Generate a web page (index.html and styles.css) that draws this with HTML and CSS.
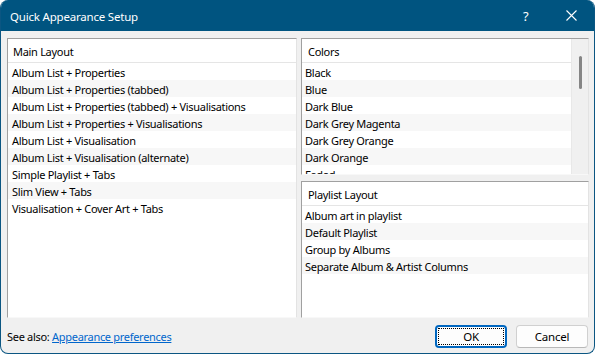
FILE: index.html
```html
<!DOCTYPE html>
<html>
<head>
<meta charset="utf-8">
<link rel="stylesheet" href="styles.css">
</head>
<body>
<div class="window">
  <div class="titlebar">
    <span class="title">Quick Appearance Setup</span>
    <span class="help">?</span>
    <span class="close"><svg width="11" height="11" viewBox="0 0 11 11"><path d="M0.5 0.5 L10.5 10.5 M10.5 0.5 L0.5 10.5" stroke="#fff" stroke-width="1.1" fill="none"/></svg></span>
  </div>
  <div class="content">
    <div class="panel main">
      <div class="list">
        <div class="header">Main Layout</div>
        <div class="row">Album List + Properties</div>
        <div class="row alt">Album List + Properties (tabbed)</div>
        <div class="row">Album List + Properties (tabbed) + Visualisations</div>
        <div class="row alt">Album List + Properties + Visualisations</div>
        <div class="row">Album List + Visualisation</div>
        <div class="row alt">Album List + Visualisation (alternate)</div>
        <div class="row">Simple Playlist + Tabs</div>
        <div class="row alt">Slim View + Tabs</div>
        <div class="row">Visualisation + Cover Art + Tabs</div>
      </div>
    </div>
    <div class="side">
      <div class="panel colors">
        <div class="list">
          <div class="header">Colors</div>
          <div class="row">Black</div>
          <div class="row alt">Blue</div>
          <div class="row">Dark Blue</div>
          <div class="row alt">Dark Grey Magenta</div>
          <div class="row">Dark Grey Orange</div>
          <div class="row alt">Dark Orange</div>
          <div class="row">Faded</div>
        </div>
        <div class="scrollbar"><div class="thumb"></div></div>
      </div>
      <div class="panel playlist">
        <div class="list">
          <div class="header">Playlist Layout</div>
          <div class="row">Album art in playlist</div>
          <div class="row alt">Default Playlist</div>
          <div class="row">Group by Albums</div>
          <div class="row alt">Separate Album &amp; Artist Columns</div>
        </div>
      </div>
    </div>
  </div>
  <div class="footer">
    <div class="seealso">See also: <a class="link" href="#">Appearance preferences</a></div>
    <div class="buttons">
      <button class="btn default"><span class="focus">OK</span></button>
      <button class="btn">Cancel</button>
    </div>
  </div>
</div>
</body>
</html>
```

FILE: styles.css
```css
html, body {
  margin: 0;
  padding: 0;
  background: #ffffff;
}
body {
  font-family: "Noto Sans", "Open Sans", "DejaVu Sans", sans-serif;
  font-size: 11px;
  letter-spacing: -0.3px;
  color: #000;
}
.window {
  width: 595px;
  height: 354px;
  box-sizing: border-box;
  border: 1px solid #0b5682;
  border-top: none;
  border-radius: 8px;
  background: #f0f0f0;
  overflow: hidden;
  display: flex;
  flex-direction: column;
}
.titlebar {
  height: 31px;
  flex: none;
  background: #005480;
  color: #fff;
  display: flex;
  align-items: center;
  padding-left: 9px;
  font-size: 11.5px;
  letter-spacing: -0.2px;
}
.title {
  flex: 1;
  padding-top: 1px;
}
.help {
  width: 12px;
  margin-right: 31px;
  font-size: 13px;
}
.close {
  display: flex;
  width: 11px;
  height: 11px;
  margin-right: 17px;
}
.content {
  flex: none;
  display: grid;
  grid-template-columns: 290px 288px;
  column-gap: 4px;
  padding: 7px 6px 0 6px;
  height: 280px;
}
.panel {
  box-sizing: border-box;
  background: #fff;
  border-top: 1px solid #a0a0a0;
  border-left: 1px solid #a0a0a0;
  border-right: 1px solid #e3e3e3;
  border-bottom: 1px solid #f8f8f8;
  overflow: hidden;
}
.main {
  height: 280px;
}
.side {
  display: flex;
  flex-direction: column;
  gap: 6px;
}
.colors {
  height: 137px;
  display: flex;
}
.playlist {
  height: 137px;
}
.list {
  flex: 1;
  min-width: 0;
}
.header {
  height: 24px;
  box-sizing: border-box;
  padding-top: 2px;
  line-height: 21px;
  border-bottom: 1px solid #e5e5e5;
  padding-left: 5px;
  white-space: nowrap;
}
.row {
  height: 17px;
  box-sizing: border-box;
  padding-top: 2px;
  line-height: 15px;
  padding-left: 4px;
  white-space: nowrap;
}
.row.alt {
  background: #f7f7f7;
}
.colors .row, .playlist .row {
  padding-left: 3px;
}
.colors .header, .playlist .header {
  padding-left: 6px;
}
.colors .list {
  border-right: 1px solid #e8e8e8;
}
.scrollbar {
  width: 16px;
  flex: none;
  background: #f0f0f0;
  position: relative;
}
.thumb {
  position: absolute;
  left: 7px;
  top: 17px;
  width: 3px;
  height: 33px;
  border-radius: 2px;
  background: #858585;
}
.footer {
  flex: 1;
  display: flex;
  align-items: center;
  justify-content: space-between;
  padding: 1px 6px 0 6px;
}
.link {
  color: #0066cc;
  text-decoration: underline;
}
.buttons {
  display: flex;
  gap: 9px;
}
.btn {
  width: 72px;
  height: 23px;
  box-sizing: border-box;
  background: #fdfdfd;
  border: 1px solid #d0d0d0;
  border-bottom-color: #b8b8b8;
  border-radius: 4px;
  font-family: inherit;
  font-size: 11.5px;
  letter-spacing: -0.2px;
  color: #000;
  padding: 0;
  display: flex;
  align-items: center;
  justify-content: center;
}
.btn.default {
  border: 2px solid #0067c0;
  padding: 1px;
}
.focus {
  flex: 1;
  align-self: stretch;
  display: flex;
  align-items: center;
  justify-content: center;
  border: 1px dotted #000;
}
```
